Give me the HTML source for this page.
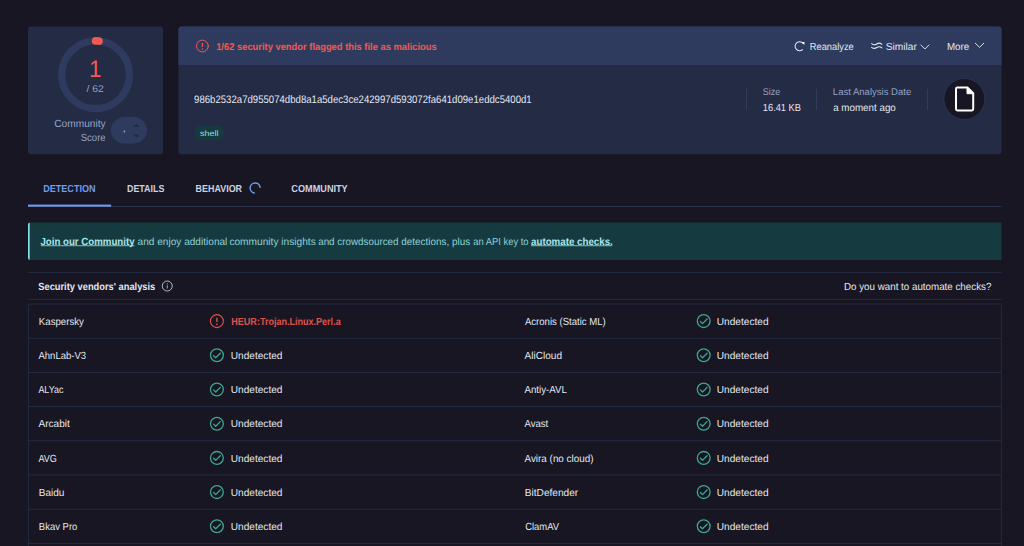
<!DOCTYPE html>
<html lang="en"><head><meta charset="utf-8"><title>VirusTotal - File</title>
<style>html,body{margin:0;padding:0;background:#171622;overflow:hidden}svg{display:block}text{font-family:"Liberation Sans",sans-serif;white-space:pre;text-rendering:geometricPrecision}</style>
</head><body>
<svg width="1024" height="546" viewBox="0 0 1024 546">
<rect width="1024" height="546" fill="#171622"/>
<rect x="28" y="26.4" width="135" height="127.8" fill="#242b45" rx="3"/>
<circle cx="95.6" cy="74.8" r="33.9" fill="none" stroke="#2e3b5e" stroke-width="7.3"/>
<path d="M95.6 40.9A33.9 33.9 0 0 1 99.03 41.07" fill="none" stroke="#f15a50" stroke-width="7.6" stroke-linecap="round"/>
<text x="89.10" y="76.90" font-size="24" fill="#f15a50" font-weight="normal" textLength="12.57" lengthAdjust="spacingAndGlyphs" font-family="Liberation Mono, monospace">1</text>
<text x="86.49" y="91.70" font-size="9.8" fill="#98a2c2" font-weight="normal" textLength="17.37" lengthAdjust="spacingAndGlyphs">/ 62</text>
<text x="54.16" y="127.20" font-size="10.4" fill="#98a2c2" font-weight="normal" textLength="51.48" lengthAdjust="spacingAndGlyphs">Community</text>
<text x="80.74" y="140.80" font-size="10.4" fill="#98a2c2" font-weight="normal" textLength="24.93" lengthAdjust="spacingAndGlyphs">Score</text>
<rect x="110.8" y="117" width="36.2" height="26.5" fill="#2e3b5e" rx="13.25"/>
<circle cx="124.4" cy="131.5" r="0.9" fill="#98a2c2"/>
<path d="M132.8 127L136.25 123.7L139.7 127Z M132.8 134.2L136.25 137.5L139.7 134.2Z" fill="#242b45"/>
<rect x="178.4" y="26.4" width="823.1" height="127.8" fill="#242b45" rx="3"/>
<path d="M178.4 64.9V29.4a3 3 0 0 1 3-3H998.5a3 3 0 0 1 3 3V64.9Z" fill="#2e3b5e"/>
<g fill="none" stroke="#f15a50" stroke-width="1" stroke-linecap="round"><circle cx="202.4" cy="46" r="5.9"/><path d="M202.4 42.93V46.71" stroke-width="1.30" stroke-linecap="butt"/></g><circle cx="202.4" cy="48.95" r="0.80" fill="#f15a50"/>
<text x="216.16" y="49.80" font-size="9.9" fill="#f15a50" font-weight="bold" textLength="220.52" lengthAdjust="spacingAndGlyphs">1/62 security vendor flagged this file as malicious</text>
<g fill="none" stroke="#e3e7f1" stroke-width="1.05" stroke-linecap="round" stroke-linejoin="round"><path d="M803.05 43.3A4.5 4.5 0 1 0 802.6 49.55"/><path d="M871.6 43.7Q874.1 45.7 876.75 43.95T881.9 44.3"/><path d="M871.6 47.3Q874.1 49.3 876.75 47.55T881.9 47.9"/><path d="M920.9 45L924.9 49L928.9 45" stroke-width="0.95"/><path d="M975.3 43.2L979.5 47.4L983.8 43.2" stroke-width="0.95"/></g><path d="M801.7 42.1L804.5 41.9L804.3 44.9Z" fill="#fff"/>
<text x="809.74" y="49.80" font-size="10.2" fill="#e3e7f1" font-weight="normal" textLength="44.01" lengthAdjust="spacingAndGlyphs">Reanalyze</text>
<text x="885.83" y="49.80" font-size="10.2" fill="#e3e7f1" font-weight="normal" textLength="31.02" lengthAdjust="spacingAndGlyphs">Similar</text>
<text x="946.90" y="49.80" font-size="10.2" fill="#e3e7f1" font-weight="normal" textLength="22.27" lengthAdjust="spacingAndGlyphs">More</text>
<text x="194.06" y="102.90" font-size="10.9" fill="#e3e7f1" font-weight="normal" textLength="337.65" lengthAdjust="spacingAndGlyphs">986b2532a7d955074dbd8a1a5dec3ce242997d593072fa641d09e1eddc5400d1</text>
<rect x="194.5" y="125.2" width="29.5" height="15" fill="#153b40" rx="7.5"/>
<text x="199.95" y="136.00" font-size="8.0" fill="#9adbe1" font-weight="normal" textLength="18.44" lengthAdjust="spacingAndGlyphs">shell</text>
<rect x="746.15" y="88.8" width="0.7" height="21" fill="#3a4567"/>
<rect x="816.25" y="88.8" width="0.7" height="21" fill="#3a4567"/>
<rect x="927.25" y="88.8" width="0.7" height="21" fill="#3a4567"/>
<text x="762.66" y="94.90" font-size="9.8" fill="#98a2c2" font-weight="normal" textLength="17.48" lengthAdjust="spacingAndGlyphs">Size</text>
<text x="762.86" y="110.50" font-size="10.3" fill="#e3e7f1" font-weight="normal" textLength="38.05" lengthAdjust="spacingAndGlyphs">16.41 KB</text>
<text x="832.84" y="94.90" font-size="9.8" fill="#98a2c2" font-weight="normal" textLength="78.36" lengthAdjust="spacingAndGlyphs">Last Analysis Date</text>
<text x="833.17" y="110.50" font-size="10.3" fill="#e3e7f1" font-weight="normal" textLength="62.65" lengthAdjust="spacingAndGlyphs">a moment ago</text>
<circle cx="964.4" cy="99" r="20.5" fill="#171622" stroke="#2f3958" stroke-width="0.8"/>
<path d="M957.4 87.5H967.4L973.2 93.3V109a1.4 1.4 0 0 1-1.4 1.4H957.4a1.4 1.4 0 0 1-1.4-1.4V88.9a1.4 1.4 0 0 1 1.4-1.4Z" fill="none" stroke="#fff" stroke-width="2" stroke-linejoin="round"/><path d="M967 87.5L973.2 93.7H967Z" fill="#fff" stroke="#fff" stroke-width="1" stroke-linejoin="round"/>
<text x="43.27" y="192.00" font-size="10.2" fill="#6f9ceb" font-weight="bold" textLength="52.21" lengthAdjust="spacingAndGlyphs">DETECTION</text>
<text x="126.97" y="192.00" font-size="10.2" fill="#ccd1e3" font-weight="bold" textLength="37.38" lengthAdjust="spacingAndGlyphs">DETAILS</text>
<text x="195.58" y="192.00" font-size="10.2" fill="#ccd1e3" font-weight="bold" textLength="46.50" lengthAdjust="spacingAndGlyphs">BEHAVIOR</text>
<text x="291.35" y="192.00" font-size="10.2" fill="#ccd1e3" font-weight="bold" textLength="56.37" lengthAdjust="spacingAndGlyphs">COMMUNITY</text>
<path d="M254.28 192.92A5.0 5.0 0 1 1 260.10 187.30" fill="none" stroke="#6f9ceb" stroke-width="1.45" stroke-linecap="round"/>
<rect x="28" y="206" width="973.5" height="0.9" fill="#2a3351" rx="0"/>
<rect x="28" y="204.6" width="83.2" height="2.1" fill="#6f9ceb" rx="0"/>
<path d="M30.2 222.5H1001.5V260H30.2a2.2 2.2 0 0 1-2.2-2.2V224.7a2.2 2.2 0 0 1 2.2-2.2Z" fill="#153b40"/>
<path d="M29.7 222.5H30.2a2.2 2.2 0 0 0-2.2 2.2V257.8a2.2 2.2 0 0 0 2.2 2.2H29.7Z" fill="#87dee6"/>
<rect x="40.8" y="245.4" width="93.6" height="0.75" fill="#a9e6ea" rx="0"/>
<rect x="531" y="245.4" width="81.2" height="0.75" fill="#a9e6ea" rx="0"/>
<text x="40.40" y="244.50" font-size="10.3" fill="#a9e6ea" font-weight="bold" textLength="94.17" lengthAdjust="spacingAndGlyphs">Join our Community</text>
<text x="137.54" y="244.50" font-size="10.3" fill="#8fd0d6" font-weight="normal" textLength="89.83" lengthAdjust="spacingAndGlyphs">and enjoy additional</text>
<text x="229.39" y="244.50" font-size="10.3" fill="#8fd0d6" font-weight="normal" textLength="86.39" lengthAdjust="spacingAndGlyphs">community insights</text>
<text x="318.17" y="244.50" font-size="10.3" fill="#8fd0d6" font-weight="normal" textLength="80.40" lengthAdjust="spacingAndGlyphs">and crowdsourced</text>
<text x="401.17" y="244.50" font-size="10.3" fill="#8fd0d6" font-weight="normal" textLength="68.97" lengthAdjust="spacingAndGlyphs">detections, plus</text>
<text x="473.29" y="244.50" font-size="10.3" fill="#8fd0d6" font-weight="normal" textLength="55.28" lengthAdjust="spacingAndGlyphs">an API key to</text>
<text x="531.06" y="244.50" font-size="10.3" fill="#a9e6ea" font-weight="bold" textLength="81.71" lengthAdjust="spacingAndGlyphs">automate checks.</text>
<rect x="28" y="272.2" width="973.5" height="0.7" fill="#2a3351" rx="0"/>
<rect x="28" y="299.2" width="973.5" height="0.7" fill="#2a3351" rx="0"/>
<text x="38.28" y="289.80" font-size="10.3" fill="#e3e7f1" font-weight="bold" textLength="117.02" lengthAdjust="spacingAndGlyphs">Security vendors' analysis</text>
<circle cx="167.25" cy="286" r="5" fill="none" stroke="#c5cadb" stroke-width="0.9"/><path d="M167.25 285.3V288.5" stroke="#a4aabf" stroke-width="1" fill="none"/><circle cx="167.25" cy="283.8" r="0.6" fill="#a4aabf"/>
<text x="843.96" y="289.70" font-size="10.3" fill="#e3e7f1" font-weight="normal" textLength="147.42" lengthAdjust="spacingAndGlyphs">Do you want to automate checks?</text>
<rect x="28.35" y="304.0" width="973.1" height="260" fill="none" stroke="#2a3351" stroke-width="0.7" rx="1.5"/>
<text x="38.86" y="325.00" font-size="10.3" fill="#e3e7f1" font-weight="normal" textLength="45.06" lengthAdjust="spacingAndGlyphs">Kaspersky</text>
<text x="524.88" y="325.00" font-size="10.3" fill="#e3e7f1" font-weight="normal" textLength="80.88" lengthAdjust="spacingAndGlyphs">Acronis (Static ML)</text>
<g fill="none" stroke="#e0524c" stroke-width="1.05" stroke-linecap="round"><circle cx="216.9" cy="321.1" r="6.5"/><path d="M216.9 317.72V321.88" stroke-width="1.37" stroke-linecap="butt"/></g><circle cx="216.9" cy="324.35" r="0.84" fill="#e0524c"/>
<text x="231.30" y="325.00" font-size="10.3" fill="#e0524c" font-weight="bold" textLength="109.37" lengthAdjust="spacingAndGlyphs">HEUR:Trojan.Linux.Perl.a</text>
<g fill="none" stroke="#3ea690" stroke-width="1.3" stroke-linecap="round" stroke-linejoin="round"><circle cx="703.7" cy="321.10" r="6.4"/><path d="M700.40 321.50L702.50 323.60L707.10 319.00"/></g>
<text x="716.75" y="325.00" font-size="10.3" fill="#e3e7f1" font-weight="normal" textLength="51.82" lengthAdjust="spacingAndGlyphs">Undetected</text>
<rect x="28.35" y="337.84999999999997" width="973.1" height="0.7" fill="#2a3351" rx="0"/>
<text x="38.48" y="359.00" font-size="10.3" fill="#e3e7f1" font-weight="normal" textLength="47.67" lengthAdjust="spacingAndGlyphs">AhnLab-V3</text>
<text x="524.52" y="359.00" font-size="10.3" fill="#e3e7f1" font-weight="normal" textLength="37.48" lengthAdjust="spacingAndGlyphs">AliCloud</text>
<g fill="none" stroke="#3ea690" stroke-width="1.3" stroke-linecap="round" stroke-linejoin="round"><circle cx="216.9" cy="355.30" r="6.4"/><path d="M213.60 355.70L215.70 357.80L220.30 353.20"/></g>
<text x="230.75" y="359.00" font-size="10.3" fill="#e3e7f1" font-weight="normal" textLength="51.73" lengthAdjust="spacingAndGlyphs">Undetected</text>
<g fill="none" stroke="#3ea690" stroke-width="1.3" stroke-linecap="round" stroke-linejoin="round"><circle cx="703.7" cy="355.30" r="6.4"/><path d="M700.40 355.70L702.50 357.80L707.10 353.20"/></g>
<text x="716.75" y="359.00" font-size="10.3" fill="#e3e7f1" font-weight="normal" textLength="51.82" lengthAdjust="spacingAndGlyphs">Undetected</text>
<rect x="28.35" y="372.04999999999995" width="973.1" height="0.7" fill="#2a3351" rx="0"/>
<text x="38.42" y="393.00" font-size="10.3" fill="#e3e7f1" font-weight="normal" textLength="25.03" lengthAdjust="spacingAndGlyphs">ALYac</text>
<text x="524.48" y="393.00" font-size="10.3" fill="#e3e7f1" font-weight="normal" textLength="42.47" lengthAdjust="spacingAndGlyphs">Antiy-AVL</text>
<g fill="none" stroke="#3ea690" stroke-width="1.3" stroke-linecap="round" stroke-linejoin="round"><circle cx="216.9" cy="389.50" r="6.4"/><path d="M213.60 389.90L215.70 392.00L220.30 387.40"/></g>
<text x="230.75" y="393.00" font-size="10.3" fill="#e3e7f1" font-weight="normal" textLength="51.73" lengthAdjust="spacingAndGlyphs">Undetected</text>
<g fill="none" stroke="#3ea690" stroke-width="1.3" stroke-linecap="round" stroke-linejoin="round"><circle cx="703.7" cy="389.50" r="6.4"/><path d="M700.40 389.90L702.50 392.00L707.10 387.40"/></g>
<text x="716.75" y="393.00" font-size="10.3" fill="#e3e7f1" font-weight="normal" textLength="51.82" lengthAdjust="spacingAndGlyphs">Undetected</text>
<rect x="28.35" y="406.25" width="973.1" height="0.7" fill="#2a3351" rx="0"/>
<text x="38.54" y="427.00" font-size="10.3" fill="#e3e7f1" font-weight="normal" textLength="31.29" lengthAdjust="spacingAndGlyphs">Arcabit</text>
<text x="524.48" y="427.00" font-size="10.3" fill="#e3e7f1" font-weight="normal" textLength="23.72" lengthAdjust="spacingAndGlyphs">Avast</text>
<g fill="none" stroke="#3ea690" stroke-width="1.3" stroke-linecap="round" stroke-linejoin="round"><circle cx="216.9" cy="423.70" r="6.4"/><path d="M213.60 424.10L215.70 426.20L220.30 421.60"/></g>
<text x="230.75" y="427.00" font-size="10.3" fill="#e3e7f1" font-weight="normal" textLength="51.73" lengthAdjust="spacingAndGlyphs">Undetected</text>
<g fill="none" stroke="#3ea690" stroke-width="1.3" stroke-linecap="round" stroke-linejoin="round"><circle cx="703.7" cy="423.70" r="6.4"/><path d="M700.40 424.10L702.50 426.20L707.10 421.60"/></g>
<text x="716.75" y="427.00" font-size="10.3" fill="#e3e7f1" font-weight="normal" textLength="51.82" lengthAdjust="spacingAndGlyphs">Undetected</text>
<rect x="28.35" y="440.45" width="973.1" height="0.7" fill="#2a3351" rx="0"/>
<text x="38.42" y="462.00" font-size="10.3" fill="#e3e7f1" font-weight="normal" textLength="18.48" lengthAdjust="spacingAndGlyphs">AVG</text>
<text x="524.52" y="462.00" font-size="10.3" fill="#e3e7f1" font-weight="normal" textLength="69.01" lengthAdjust="spacingAndGlyphs">Avira (no cloud)</text>
<g fill="none" stroke="#3ea690" stroke-width="1.3" stroke-linecap="round" stroke-linejoin="round"><circle cx="216.9" cy="457.90" r="6.4"/><path d="M213.60 458.30L215.70 460.40L220.30 455.80"/></g>
<text x="230.75" y="462.00" font-size="10.3" fill="#e3e7f1" font-weight="normal" textLength="51.73" lengthAdjust="spacingAndGlyphs">Undetected</text>
<g fill="none" stroke="#3ea690" stroke-width="1.3" stroke-linecap="round" stroke-linejoin="round"><circle cx="703.7" cy="457.90" r="6.4"/><path d="M700.40 458.30L702.50 460.40L707.10 455.80"/></g>
<text x="716.75" y="462.00" font-size="10.3" fill="#e3e7f1" font-weight="normal" textLength="51.82" lengthAdjust="spacingAndGlyphs">Undetected</text>
<rect x="28.35" y="474.65" width="973.1" height="0.7" fill="#2a3351" rx="0"/>
<text x="38.76" y="496.00" font-size="10.3" fill="#e3e7f1" font-weight="normal" textLength="25.70" lengthAdjust="spacingAndGlyphs">Baidu</text>
<text x="524.77" y="496.00" font-size="10.3" fill="#e3e7f1" font-weight="normal" textLength="53.49" lengthAdjust="spacingAndGlyphs">BitDefender</text>
<g fill="none" stroke="#3ea690" stroke-width="1.3" stroke-linecap="round" stroke-linejoin="round"><circle cx="216.9" cy="492.10" r="6.4"/><path d="M213.60 492.50L215.70 494.60L220.30 490.00"/></g>
<text x="230.75" y="496.00" font-size="10.3" fill="#e3e7f1" font-weight="normal" textLength="51.73" lengthAdjust="spacingAndGlyphs">Undetected</text>
<g fill="none" stroke="#3ea690" stroke-width="1.3" stroke-linecap="round" stroke-linejoin="round"><circle cx="703.7" cy="492.10" r="6.4"/><path d="M700.40 492.50L702.50 494.60L707.10 490.00"/></g>
<text x="716.75" y="496.00" font-size="10.3" fill="#e3e7f1" font-weight="normal" textLength="51.82" lengthAdjust="spacingAndGlyphs">Undetected</text>
<rect x="28.35" y="508.85" width="973.1" height="0.7" fill="#2a3351" rx="0"/>
<text x="38.86" y="530.00" font-size="10.3" fill="#e3e7f1" font-weight="normal" textLength="38.45" lengthAdjust="spacingAndGlyphs">Bkav Pro</text>
<text x="525.19" y="530.00" font-size="10.3" fill="#e3e7f1" font-weight="normal" textLength="33.84" lengthAdjust="spacingAndGlyphs">ClamAV</text>
<g fill="none" stroke="#3ea690" stroke-width="1.3" stroke-linecap="round" stroke-linejoin="round"><circle cx="216.9" cy="526.30" r="6.4"/><path d="M213.60 526.70L215.70 528.80L220.30 524.20"/></g>
<text x="230.75" y="530.00" font-size="10.3" fill="#e3e7f1" font-weight="normal" textLength="51.73" lengthAdjust="spacingAndGlyphs">Undetected</text>
<g fill="none" stroke="#3ea690" stroke-width="1.3" stroke-linecap="round" stroke-linejoin="round"><circle cx="703.7" cy="526.30" r="6.4"/><path d="M700.40 526.70L702.50 528.80L707.10 524.20"/></g>
<text x="716.75" y="530.00" font-size="10.3" fill="#e3e7f1" font-weight="normal" textLength="51.82" lengthAdjust="spacingAndGlyphs">Undetected</text>
<rect x="28.35" y="543.0500000000001" width="973.1" height="0.7" fill="#2a3351" rx="0"/>
</svg>
</body></html>
